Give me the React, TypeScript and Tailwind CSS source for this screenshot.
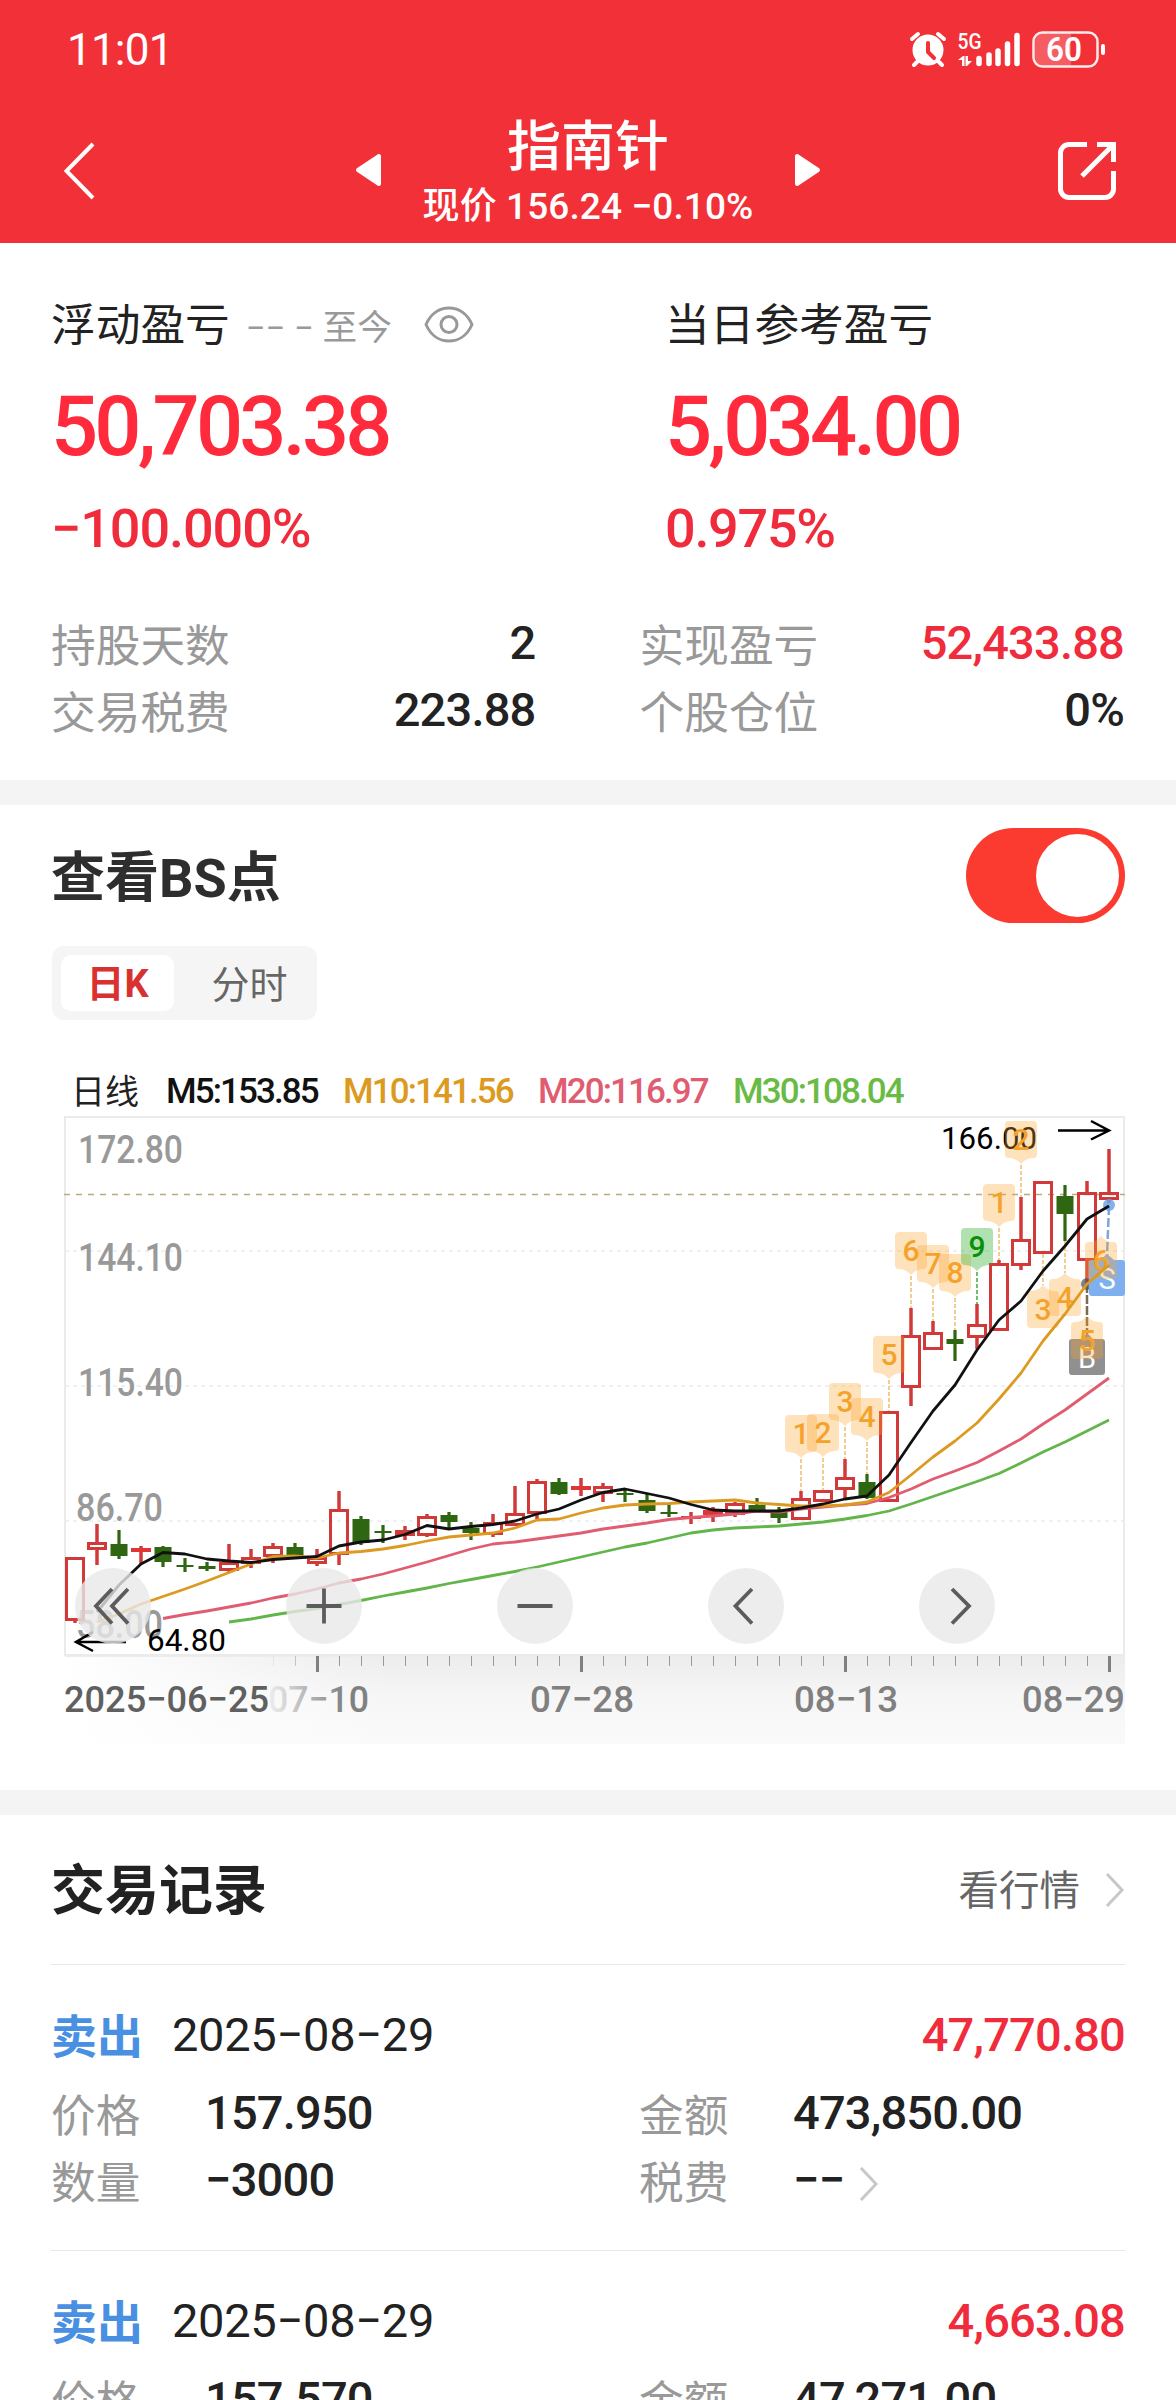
import React, { useState } from 'react';

// [high, body top, body bottom, low, up] in chart units
const candles: [number, number, number, number, boolean][] = [
  [1557, 1557, 1621, 1623, true],
  [1524, 1542, 1550, 1565, true],
  [1530, 1544, 1556, 1559, false],
  [1546, 1548, 1552, 1564, true],
  [1546, 1547, 1562, 1567, false],
  [1558, 1565, 1567, 1572, false],
  [1562, 1566, 1569, 1571, false],
  [1544, 1562, 1571, 1573, true],
  [1549, 1557, 1564, 1568, true],
  [1543, 1546, 1557, 1563, true],
  [1543, 1547, 1556, 1556, false],
  [1549, 1557, 1564, 1566, true],
  [1491, 1509, 1555, 1565, true],
  [1516, 1519, 1543, 1545, false],
  [1525, 1531, 1533, 1543, false],
  [1526, 1530, 1536, 1540, true],
  [1514, 1516, 1536, 1537, true],
  [1512, 1515, 1522, 1528, false],
  [1522, 1528, 1533, 1540, false],
  [1514, 1522, 1535, 1537, true],
  [1486, 1513, 1526, 1526, true],
  [1479, 1481, 1514, 1519, true],
  [1478, 1482, 1494, 1495, false],
  [1478, 1486, 1490, 1496, true],
  [1483, 1486, 1494, 1502, true],
  [1489, 1493, 1495, 1502, false],
  [1494, 1500, 1511, 1513, false],
  [1504, 1512, 1514, 1517, false],
  [1512, 1516, 1519, 1524, true],
  [1507, 1510, 1515, 1522, true],
  [1502, 1503, 1515, 1517, true],
  [1498, 1505, 1510, 1510, false],
  [1507, 1512, 1518, 1523, false],
  [1491, 1498, 1520, 1520, true],
  [1490, 1490, 1502, 1502, true],
  [1459, 1477, 1490, 1498, true],
  [1474, 1482, 1498, 1499, false],
  [1411, 1411, 1502, 1502, true],
  [1308, 1335, 1388, 1406, true],
  [1321, 1332, 1350, 1350, true],
  [1330, 1339, 1344, 1361, false],
  [1304, 1324, 1338, 1349, true],
  [1260, 1263, 1331, 1331, true],
  [1197, 1239, 1266, 1270, true],
  [1181, 1181, 1254, 1254, true],
  [1185, 1196, 1214, 1241, false],
  [1181, 1192, 1261, 1283, true],
  [1149, 1192, 1200, 1203, true],
];

const averages = [
  {
    color: '#62b54a',
    start: 7,
    values: [
      1622, 1619, 1615, 1611.5, 1608.5, 1604.5, 1600.5, 1596, 1592, 1588, 1583.5, 1579.5, 1575.5,
      1571.5, 1567, 1562, 1557, 1552, 1547, 1543, 1538, 1533, 1530, 1528, 1527, 1526, 1524, 1522,
      1519, 1515.5, 1511, 1504, 1496.5, 1489, 1481.5, 1473.5, 1463, 1452, 1442, 1431, 1420,
    ],
  },
  {
    color: '#e05c70',
    start: 4,
    values: [
      1618.5, 1614.5, 1611, 1607, 1603, 1598, 1594, 1589, 1583, 1579, 1574, 1568, 1562, 1555.5,
      1549, 1544, 1542, 1539, 1536, 1533, 1529, 1526, 1523, 1519.5, 1517.5, 1516, 1514, 1511,
      1512, 1509, 1507, 1505, 1503.5, 1497.5, 1489, 1479, 1471, 1462.5, 1451, 1439, 1424, 1410,
      1394, 1378,
    ],
  },
  {
    color: '#dc9a20',
    start: 1,
    values: [
      1622, 1614, 1604, 1596.5, 1589, 1581, 1572.5, 1564, 1556.5, 1556, 1558, 1553, 1551.5, 1549,
      1545.5, 1541, 1537, 1535, 1533, 1528, 1520, 1519, 1513, 1508, 1505, 1504, 1503.5, 1502,
      1501, 1500, 1503, 1504.5, 1506, 1506, 1505, 1502, 1492.5, 1475, 1457, 1441, 1423, 1399,
      1373, 1341, 1314, 1284, 1265,
    ],
  },
  {
    color: '#111111',
    start: 1,
    values: [
      1612, 1585, 1564, 1552.5, 1554, 1559, 1561, 1562.5, 1559.5, 1558, 1556.5, 1546, 1542, 1540,
      1534.5, 1525.5, 1529, 1526.5, 1524.5, 1521, 1514, 1509, 1500, 1492.5, 1489, 1493.5, 1498,
      1504.5, 1510, 1511, 1511, 1511, 1508, 1504, 1499, 1496, 1475, 1442.5, 1411, 1385, 1350,
      1320, 1301, 1271, 1246, 1219, 1206,
    ],
  },
];

// count badges: candle index, top of the box, label
const badgesAbove = [
  { i: 33, y: 1415, n: '1' },
  { i: 34, y: 1414, n: '2' },
  { i: 35, y: 1383, n: '3' },
  { i: 36, y: 1398, n: '4' },
  { i: 37, y: 1336, n: '5' },
  { i: 38, y: 1232, n: '6' },
  { i: 39, y: 1245, n: '7' },
  { i: 40, y: 1254, n: '8' },
  { i: 41, y: 1228, n: '9' },
  { i: 42, y: 1184, n: '1' },
  { i: 43, y: 1121, n: '2' },
];

const badgesBelow = [
  { x: 1043, y: 1291, n: '3' },
  { x: 1065, y: 1279, n: '4' },
  { x: 1087, y: 1322, n: '5' },
  { x: 1101, y: 1242, n: '6' },
];

const priceLabels = [
  { x: 78, y: 1163, w: 105, text: '172.80' },
  { x: 78, y: 1271, w: 105, text: '144.10' },
  { x: 78, y: 1396, w: 105, text: '115.40' },
  { x: 76, y: 1521, w: 87, text: '86.70' },
  { x: 76, y: 1638, w: 87, text: '58.00' },
];

const dateLabels = [
  { x: 530, w: 104, text: '07−28' },
  { x: 794, w: 104, text: '08−13' },
  { x: 1022, w: 103, text: '08−29' },
];

const records = [
  { date: '2025−08−29', profit: '47,770.80', price: '157.950', count: '−3000', amount: '473,850.00' },
  { date: '2025−08−29', profit: '4,663.08', price: '157.570', count: '−300', amount: '47,271.00' },
];

const cx = (i: number) => 75 + 22 * i;

function StatusIcons() {
  return (
    <svg width="200" height="44" viewBox="908 28 200 44" fill="none">
      <circle cx="928" cy="50" r="15.5" fill="#fff" />
      <path
        d="M912 39l6-5M944 39l-6-5M918 61l-4 4M938 61l4 4"
        stroke="#fff"
        strokeWidth="4"
        strokeLinecap="round"
      />
      <path
        d="M928 43v9l6 6"
        stroke="#f23037"
        strokeWidth="4"
        strokeLinecap="round"
        strokeLinejoin="round"
      />
      <text x="957.5" y="49" fill="#fff" fontSize="22" fontWeight="500" textLength="24" lengthAdjust="spacingAndGlyphs">
        5G
      </text>
      <path d="M958 60l5-4h1.500v10h-2.500v-6zM972 61l-5 5h-1.500v-10h2.500v5z" fill="#fff" />
      <path
        d="M979 58.500v5M989 55v8.500M998 51v12.500M1007.500 44v19.500M1017 35.500v28"
        stroke="#fff"
        strokeWidth="5.500"
        strokeLinecap="round"
      />
      <path d="M1044 33h27v33h-27a9 9 0 0 1-9-9v-15a9 9 0 0 1 9-9z" fill="#fff" fillOpacity=".22" />
      <rect x="1033.500" y="32.500" width="64" height="34" rx="9" stroke="#fff" strokeOpacity=".9" strokeWidth="2.500" />
      <rect x="1101" y="44" width="4" height="11" rx="2" fill="#fff" />
      <text x="1046" y="61" fill="#fff" fontSize="33" fontWeight="600" textLength="36" lengthAdjust="spacingAndGlyphs">
        60
      </text>
    </svg>
  );
}

function Chevron({ className }: { className?: string }) {
  return (
    <svg className={className} width="20" height="36" viewBox="0 0 20 36" fill="none">
      <path d="M2 2l15 16L2 34" stroke="#c8c8c8" strokeWidth="3" />
    </svg>
  );
}

function Header() {
  return (
    <div className="h-[243px] bg-[#f23037] text-white">
      <div className="flex h-[100px] items-center justify-between pr-[68px] pl-[67px]">
        <div className="text-[44px] leading-[50px] tracking-[-0.8px]">11:01</div>
        <StatusIcons />
      </div>
      <div className="grid h-[142px] grid-cols-[1fr_auto_1fr] items-center px-[60px]">
        <svg className="ml-[2px]" width="34" height="60" viewBox="62 141 34 60" fill="none">
          <path d="M93 144L66.500 171 93 198" stroke="#fff" strokeWidth="4" />
        </svg>
        <div className="flex w-[466px] items-center justify-between">
          <svg className="-mt-[2px]" width="27" height="34" viewBox="0 0 27 34">
            <path d="M24 3v28L3 17z" fill="#fff" stroke="#fff" strokeWidth="4" strokeLinejoin="round" />
          </svg>
          <div className="flex flex-col items-center gap-[7px] pt-[5px] font-medium">
            <div className="text-[54px] leading-[60px]">指南针</div>
            <div className="text-[37px] leading-[44px] tracking-[0.1px] whitespace-nowrap">现价 156.24 −0.10%</div>
          </div>
          <svg className="-mt-[2px]" width="27" height="34" viewBox="0 0 27 34">
            <path d="M3 3v28l21-14z" fill="#fff" stroke="#fff" strokeWidth="4" strokeLinejoin="round" />
          </svg>
        </div>
        <svg className="justify-self-end" width="58" height="58" viewBox="1058 142 58 58" fill="none">
          <path
            d="M1087 144.500h-18a8.500 8.500 0 0 0-8.500 8.500v36a8.500 8.500 0 0 0 8.500 8.500h36a8.500 8.500 0 0 0 8.500-8.500v-18M1097 144.500h16.500V162M1113 145l-31 31"
            stroke="#fff"
            strokeWidth="5"
          />
        </svg>
      </div>
    </div>
  );
}

function StatRow({ label, value, red }: { label: string; value: string; red?: boolean }) {
  return (
    <div className="flex h-[67px] items-center justify-between">
      <div className="text-[44.7px] leading-[60px] text-[#999]">{label}</div>
      <div
        className={`pb-2 text-[47px] leading-[54px] font-medium tracking-[-0.8px] ${red ? 'text-[#f02b3c]' : 'text-[#222]'}`}
      >
        {value}
      </div>
    </div>
  );
}

function Summary() {
  return (
    <div className="pt-[53px] pr-[52px] pb-[33px] pl-[51px]">
      <div className="grid grid-cols-[614px_1fr]">
        <div>
          <div className="flex h-[60px] items-center">
            <span className="text-[44.700px] leading-[60px] text-[#222]">浮动盈亏</span>
            <span className="ml-4 pt-1 text-[34.700px] leading-[50px] text-[#999]">−− − 至今</span>
            <svg className="-mt-[2px] ml-[32px]" width="50" height="38" viewBox="0 0 50 38" fill="none" stroke="#999" strokeWidth="3">
              <path d="M2 18.500C7 7 16 2 25 2s18 5 23 16.500C43 30 34 35 25 35S7 30 2 18.500z" strokeLinejoin="round" />
              <circle cx="25" cy="18.500" r="8" />
            </svg>
          </div>
          <div className="mt-[25px] text-[83px] leading-[92px] font-medium tracking-[-3.800px] text-[#ff2a3b]">50,703.38</div>
          <div className="mt-[26px] text-[54px] leading-[60px] font-medium tracking-[-1.100px] text-[#f02b3c]">−100.000%</div>
        </div>
        <div>
          <div className="text-[44.700px] leading-[60px] text-[#222]">当日参考盈亏</div>
          <div className="mt-[25px] text-[83px] leading-[92px] font-medium tracking-[-3.800px] text-[#ff2a3b]">5,034.00</div>
          <div className="mt-[26px] text-[54px] leading-[60px] font-medium tracking-[-1.300px] text-[#f02b3c]">0.975%</div>
        </div>
      </div>
      <div className="mt-[54px] grid grid-cols-2 gap-x-[104px]">
        <StatRow label="持股天数" value="2" />
        <StatRow label="实现盈亏" value="52,433.88" red />
        <StatRow label="交易税费" value="223.88" />
        <StatRow label="个股仓位" value="0%" />
      </div>
    </div>
  );
}

function Chart() {
  return (
    <svg className="block" width="1176" height="640" viewBox="0 1111 1176 640" fill="none">
      <defs>
        <linearGradient id="axis" x1="0" y1="0" x2="0" y2="1">
          <stop offset="0" stopColor="#ececec" />
          <stop offset=".45" stopColor="#f6f6f6" />
          <stop offset="1" stopColor="#fafafa" />
        </linearGradient>
        <linearGradient id="fade" x1="0" y1="0" x2="1" y2="0">
          <stop offset="0" stopColor="#fff" />
          <stop offset="1" stopColor="#fff" stopOpacity="0" />
        </linearGradient>
        <linearGradient id="dateFade" gradientUnits="userSpaceOnUse" x1="265" y1="0" x2="345" y2="0">
          <stop offset="0" stopColor="#808080" stopOpacity=".05" />
          <stop offset="1" stopColor="#808080" />
        </linearGradient>
      </defs>

      <rect x="65" y="1656" width="1060" height="88" fill="url(#axis)" />
      <rect x="64" y="1657" width="330" height="88" fill="url(#fade)" />
      {Array.from({ length: 39 }, (_, k) => {
        const i = k + 9;
        const major = (i - 11) % 12 === 0;
        return (
          <path
            key={i}
            d={major ? `M${cx(i) + 0.5} 1656v16` : `M${cx(i) + 0.5} 1656v10`}
            stroke={i === 9 ? '#e4e4e4' : i === 10 ? '#c4c4c4' : major ? '#808080' : '#999'}
            strokeWidth={major ? 3 : 1}
          />
        );
      })}

      <path d="M65 1251h1060M65 1386h1060M65 1521h1060" stroke="#ebebeb" strokeWidth="1.500" strokeDasharray="4 4" />
      <rect x="65" y="1117" width="1059" height="538" stroke="#ebebeb" strokeWidth="2" />

      <g fill="#999" fontSize="38" fontWeight="500">
        {priceLabels.map((p) => (
          <text key={p.text} x={p.x} y={p.y} textLength={p.w} lengthAdjust="spacingAndGlyphs">
            {p.text}
          </text>
        ))}
      </g>
      <path d="M64 1194.500h1061" stroke="#bda880" strokeWidth="1.600" strokeDasharray="6 6" />
      <text x="941" y="1149" fill="#000" fontSize="32" textLength="96" lengthAdjust="spacingAndGlyphs">
        166.00
      </text>
      <path d="M1058 1130.500h50M1091 1121l18 9.500-18 9" stroke="#000" strokeWidth="2.500" />

      {candles.map(([high, top, bottom, low, up], i) =>
        up ? (
          <g key={i} stroke="#d23a3a" strokeWidth="3">
            {high < top && <path d={`M${cx(i)} ${high}V${top}`} strokeWidth="3.500" />}
            {low > bottom && <path d={`M${cx(i)} ${bottom}V${low}`} strokeWidth="3.500" />}
            {bottom - top > 5 ? (
              <rect x={cx(i) - 8.5} y={top + 1.5} width="17" height={bottom - top - 3} />
            ) : (
              <rect x={cx(i) - 10} y={top} width="20" height={bottom - top} fill="#e03535" stroke="none" />
            )}
          </g>
        ) : (
          <g key={i} fill="#2e6612">
            <rect x={cx(i) - 1.6} y={high} width="3.200" height={low - high} />
            <rect x={cx(i) - 8.5} y={top} width="17" height={bottom - top} />
          </g>
        )
      )}

      {/* buy and sell marks */}
      <path d="M1087 1284v50" stroke="#7d6a55" strokeWidth="2.500" strokeDasharray="9 2" />
      <path d="M1109 1206l-2 50" stroke="#7fa6d8" strokeWidth="2.500" strokeDasharray="9 3" />
      <circle cx="1087" cy="1284" r="6" fill="#555" fillOpacity=".75" />
      <circle cx="1109" cy="1205" r="6" fill="#6fa5ea" fillOpacity=".85" />
      <path d="M1072 1339h9l6-6 6 6h9a3 3 0 0 1 3 3v30a3 3 0 0 1-3 3h-30a3 3 0 0 1-3-3v-30a3 3 0 0 1 3-3z" fill="#909090" />
      <path d="M1092 1260h8l7-6 7 6h8a3 3 0 0 1 3 3v30a3 3 0 0 1-3 3h-30a3 3 0 0 1-3-3v-30a3 3 0 0 1 3-3z" fill="#7eb0ef" />
      <text x="1087" y="1368" fill="#fff" fontSize="29" textAnchor="middle">
        B
      </text>
      <text x="1107" y="1289" fill="#fff" fontSize="29" textAnchor="middle">
        S
      </text>

      {badgesAbove.map(({ i, y, n }) => {
        const green = n === '9';
        return (
          <g key={i}>
            <path
              d={`M${cx(i)} ${y + 44}V${candles[i][0]}`}
              stroke={green ? '#6fbf6f' : '#f2cd92'}
              strokeWidth="2"
              strokeDasharray="4 2"
            />
            <path
              d={`M${cx(i) - 12} ${y}h24a4 4 0 0 1 4 4v29a4 4 0 0 1-4 4q-7 0-12 6q-5-6-12-6a4 4 0 0 1-4-4v-29a4 4 0 0 1 4-4z`}
              fill={green ? '#33b033' : '#fba62f'}
              fillOpacity={green ? 0.38 : 0.32}
            />
            <text
              x={cx(i)}
              y={y + 29}
              fill={green ? '#089008' : '#f5a22b'}
              fontSize="30"
              fontWeight="500"
              textAnchor="middle"
            >
              {n}
            </text>
          </g>
        );
      })}
      <path d="M1043 1254v31M1065 1241v32" stroke="#f2cd92" strokeWidth="2" strokeDasharray="4 2" />
      {badgesBelow.map(({ x, y, n }) => (
        <g key={n}>
          <path
            d={`M${x - 12} ${y}q7 0 12-6q5 6 12 6a4 4 0 0 1 4 4v29a4 4 0 0 1-4 4h-24a4 4 0 0 1-4-4v-29a4 4 0 0 1 4-4z`}
            fill="#fba62f"
            fillOpacity=".32"
          />
          <text x={x} y={y + 29} fill="#f5a22b" fontSize="30" fontWeight="500" textAnchor="middle">
            {n}
          </text>
        </g>
      ))}

      {averages.map((line) => (
        <polyline
          key={line.color}
          points={line.values.map((y, k) => `${cx(line.start + k)},${y}`).join(' ')}
          stroke={line.color}
          strokeWidth="2.800"
          strokeLinejoin="round"
        />
      ))}

      <path d="M126 1642H77M93 1632l-17 10 17 9" stroke="#000" strokeWidth="2.500" />
      <text x="147" y="1651" fill="#000" fontSize="32" textLength="79" lengthAdjust="spacingAndGlyphs">
        64.80
      </text>

      <g fill="#e8e8e8" fillOpacity=".8">
        <circle cx="113" cy="1606" r="38" />
        <circle cx="324" cy="1606" r="38" />
        <circle cx="535" cy="1606" r="38" />
        <circle cx="746" cy="1606" r="38" />
        <circle cx="957" cy="1606" r="38" />
      </g>
      <path
        d="M112 1589l-16 17 16 17.500M128 1589l-16 17 16 17.500M306.500 1606h35M324 1588.500v35M517.500 1606h35M752 1589l-16.500 17 16.500 17.500M952 1589l17 17-17 17.500"
        stroke="#5c5c5c"
        strokeWidth="3.800"
      />

      <g fontSize="37" fontWeight="500" fill="#808080">
        <text x="64" y="1712" fill="#606060" textLength="205" lengthAdjust="spacingAndGlyphs">
          2025−06−25
        </text>
        <text x="268" y="1712" fill="url(#dateFade)" textLength="101" lengthAdjust="spacingAndGlyphs">
          07−10
        </text>
        {dateLabels.map((d) => (
          <text key={d.text} x={d.x} y="1712" textLength={d.w} lengthAdjust="spacingAndGlyphs">
            {d.text}
          </text>
        ))}
      </g>
    </svg>
  );
}

function BsPanel() {
  const [tab, setTab] = useState<string>('day');
  const [open, setOpen] = useState<boolean>(true);

  return (
    <div className="h-[985px] pt-[23px]">
      <div className="flex h-[95px] items-center justify-between px-[51px]">
        <div className="pt-[6px] text-[54px] leading-[60px] font-bold text-[#2e2e2e]">查看BS点</div>
        <button
          className={`flex h-[95px] w-[159px] items-center rounded-full px-[6px] ${open ? 'justify-end bg-[#fb3b30]' : 'justify-start bg-gray-300'}`}
          onClick={() => setOpen(!open)}
        >
          <span className="size-[83px] rounded-full bg-white" />
        </button>
      </div>
      <div className="mt-[23px] ml-[52px] flex h-[74px] w-[265px] items-center rounded-xl bg-[#f5f5f5] px-[9px]">
        <button
          className={`h-[56px] w-[113px] rounded-[10px] pt-[2px] text-[38px] leading-[54px] ${tab === 'day' ? 'bg-white font-bold text-[#d93030]' : 'text-[#666]'}`}
          onClick={() => setTab('day')}
        >
          日K
        </button>
        <button
          className={`ml-[18px] h-[56px] w-[113px] rounded-[10px] pt-[3px] pl-[2px] text-[38px] leading-[54px] ${tab === 'min' ? 'bg-white font-bold text-[#d93030]' : 'text-[#666]'}`}
          onClick={() => setTab('min')}
        >
          分时
        </button>
      </div>
      <div className="mt-[51px] flex h-[40px] pl-[71px] text-[35px] leading-[42px] font-medium tracking-[-1.900px] whitespace-nowrap">
        <div className="w-[95px] text-[34px] font-normal tracking-normal text-[#222]">日线</div>
        <div className="w-[177px] text-[#111]">M5:153.85</div>
        <div className="w-[195px] text-[#dc9a20]">M10:141.56</div>
        <div className="w-[195px] text-[#e05c70]">M20:116.97</div>
        <div className="text-[#6abb45]">M30:108.04</div>
      </div>
      <Chart />
    </div>
  );
}

function Field({ label, value, arrow }: { label: string; value: string; arrow?: boolean }) {
  return (
    <div className="flex h-[67px] items-center">
      <div className="w-[154px] text-[44.700px] leading-[60px] text-[#999]">{label}</div>
      <div className="pb-2 text-[47px] leading-[54px] font-medium tracking-[-0.800px] text-[#222]">{value}</div>
      {arrow && <Chevron className="ml-[15px]" />}
    </div>
  );
}

function Records() {
  return (
    <div className="px-[51px]">
      <div className="flex h-[150px] items-center justify-between border-b border-[#e8e8e8] pt-[4px]">
        <div className="text-[54px] leading-[60px] font-bold text-[#222]">交易记录</div>
        <div className="flex items-center">
          <span className="pb-[2px] text-[40.500px] leading-[60px] text-[#666]">看行情</span>
          <Chevron className="mb-[4px] ml-[25px]" />
        </div>
      </div>
      {records.map((r, index) => (
        <div key={index} className="h-[286px] border-b border-[#e8e8e8] pt-[40px]">
          <div className="flex h-[60px] items-center">
            <div className="w-[121px] pt-1 text-[46px] leading-[60px] font-bold text-[#4a90e2]">卖出</div>
            <div className="text-[47px] leading-[60px] tracking-[-0.300px] text-[#222]">{r.date}</div>
            <div className="ml-auto text-[47px] leading-[60px] font-medium tracking-[-0.800px] text-[#f02b3c]">{r.profit}</div>
          </div>
          <div className="mt-[18px] grid grid-cols-2 gap-x-[102px]">
            <Field label="价格" value={r.price} />
            <Field label="金额" value={r.amount} />
            <Field label="数量" value={r.count} />
            <Field label="税费" value="−−" arrow />
          </div>
        </div>
      ))}
    </div>
  );
}

export default function App() {
  return (
    <div className="h-[2400px] w-[1176px] overflow-hidden bg-white font-[Roboto,'Noto_Sans_CJK_SC',sans-serif]">
      <Header />
      <Summary />
      <div className="h-[25px] bg-[#f4f4f4]" />
      <BsPanel />
      <div className="h-[25px] bg-[#f4f4f4]" />
      <Records />
    </div>
  );
}
